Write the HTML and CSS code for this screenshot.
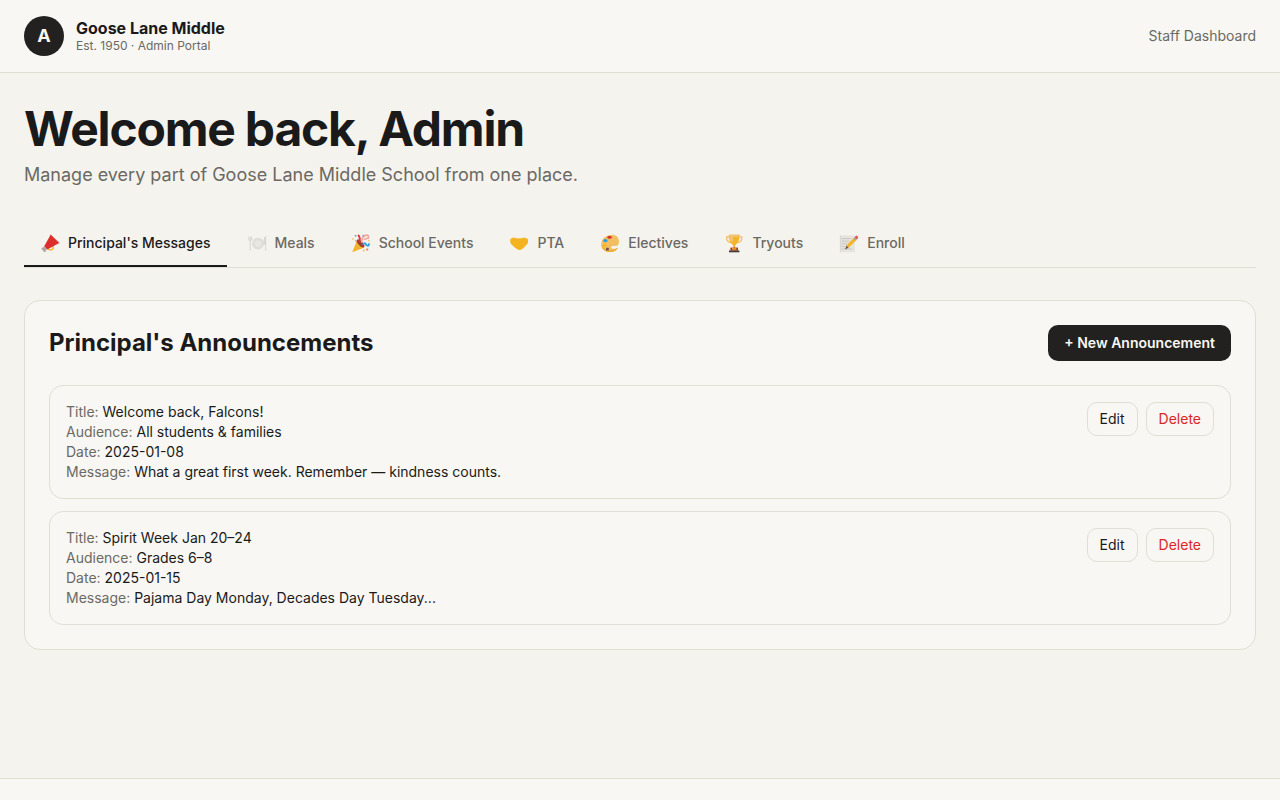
FILE: index.html
```html
<!DOCTYPE html>
<html lang="en">
<head>
  <meta charset="UTF-8">
  <meta name="viewport" content="width=device-width, initial-scale=1.0">
  <title>Goose Lane Middle - Admin Portal</title>
  <link rel="stylesheet" href="styles.css">
</head>
<body>
  <!-- Top bar -->
  <header class="site-header">
    <div class="brand">
      <div class="logo">A</div>
      <div>
        <div class="brand-name">Goose Lane Middle</div>
        <div class="brand-sub">Est. 1950 · Admin Portal</div>
      </div>
    </div>
    <div class="header-note">Staff Dashboard</div>
  </header>

  <main>
    <h1>Welcome back, Admin</h1>
    <p class="lead">Manage every part of Goose Lane Middle School from one place.</p>

    <!-- Section tabs -->
    <nav class="tabs">
      <button type="button" class="tab active">
        <!-- megaphone -->
        <svg class="icon" viewBox="0 0 20 20" aria-hidden="true">
          <circle cx="10.6" cy="14.2" r="2.7" fill="none" stroke="#f5b82e" stroke-width="1.4"/>
          <path d="M10.6 1.8 L19.3 10 L7.2 16.4 L4.2 13.2 Z" fill="#dc2f2c"/>
          <path d="M10.6 1.8 L19.3 10" stroke="#e2605a" stroke-width="1"/>
          <path d="M4 13.6 L7 16.5 L5.6 17.6 L5.8 18.8 L4.5 19.2 L1.2 15.8 Z" fill="#aaa7a3"/>
        </svg>
        Principal's Messages
      </button>
      <button type="button" class="tab">
        <!-- plate with fork and knife -->
        <svg class="icon" viewBox="0 0 20 20" aria-hidden="true">
          <circle cx="11" cy="10.6" r="6" fill="#e1dfd9"/>
          <circle cx="11" cy="10.6" r="4" fill="#e9e7e2" stroke="#d6d4ce" stroke-width=".5"/>
          <path d="M1.8 3.5 V7 Q3.2 9 4.6 7 V3.5 M3.2 3.5 V17.5" fill="none" stroke="#d8d6cf" stroke-width="1"/>
          <path d="M18.6 17.5 V3.5 Q16.8 5 17 11 H18.6" fill="#e1dfd9" stroke="#cfcdc6" stroke-width=".7"/>
        </svg>
        Meals
      </button>
      <button type="button" class="tab">
        <!-- party popper -->
        <svg class="icon" viewBox="0 0 20 20" aria-hidden="true">
          <path d="M6.2 6.8 L13.5 14.6 L1.2 19.2 Z" fill="#f3b32a"/>
          <ellipse cx="9.6" cy="10.4" rx="2.2" ry="5" transform="rotate(-43 9.6 10.4)" fill="#a53a32"/>
          <path d="M7 2 Q9.8 4.6 8.4 8.8" fill="none" stroke="#df3835" stroke-width="1.8"/>
          <path d="M10.8 9.6 Q10.6 4 14 2.4 Q18.8 1.6 17.2 5.4 Q14 5.2 13.2 7" fill="none" stroke="#efaaa5" stroke-width="1.8"/>
          <path d="M11.5 11.6 Q14.4 8.8 15.2 12 Q17.8 13.8 18.2 10.4" fill="none" stroke="#36a4df" stroke-width="2"/>
          <path d="M1.3 5.2h1.4v1.4H1.3z M12 16.8h1.5v1.5H12z" fill="#f3b32a"/>
          <path d="M3.8 2h1.5v1.5H3.8z M11.6 2h1.3v1.3h-1.3z" fill="#36a4df"/>
          <path d="M15.2 15.6h2v2h-2z M4 7.2h1.3v1.3H4z" fill="#e9817b"/>
          <path d="M17 7.2h1.8v1.3H17z" fill="#f1c15f"/>
        </svg>
        School Events
      </button>
      <button type="button" class="tab">
        <!-- handshake -->
        <svg class="icon" viewBox="0 0 20 20" aria-hidden="true">
          <path d="M1.4 6 Q3.8 4 6.8 5 Q10 5.5 13.2 5 Q16.2 4 18.8 6 Q20 10.2 16.8 12.6 Q13.2 17.2 10.2 17 Q7.4 16.6 3.6 12.6 Q.4 10.4 1.4 6 Z" fill="#f4b421"/>
          <path d="M3.4 4.7 Q5 4.2 6.8 5 L9.8 5.5 L13 5 Q15 4.2 16.6 4.7" fill="none" stroke="#f1d99b" stroke-width=".8" stroke-dasharray="1 1"/>
        </svg>
        PTA
      </button>
      <button type="button" class="tab">
        <!-- palette -->
        <svg class="icon" viewBox="0 0 20 20" aria-hidden="true">
          <path d="M12 1.8 Q18.6 2.2 19 8.4 Q18.8 13.6 14.6 12.8 Q11.4 13 12.6 15 Q14.2 16.8 17.6 14.6 Q17 18.4 11 19 Q2 19.2 1.2 11.8 Q1.2 3 12 1.8 Z" fill="#f3be62"/>
          <path d="M1.2 11.4 Q2 19.2 11 19 Q16.6 18.6 17.6 14.8 Q14.4 17.6 10 17.2 Q4.6 16.8 1.2 11.4 Z" fill="#efae35"/>
          <ellipse cx="9.6" cy="4.2" rx="2.2" ry="1.5" fill="#d7352c"/>
          <ellipse cx="5.4" cy="7.6" rx="2.2" ry="1.7" fill="#2ba0dd"/>
          <circle cx="4.4" cy="12.4" r="1.7" fill="#f7b718"/>
          <rect x="6" y="14.8" width="2.8" height="2.8" rx=".7" fill="#66594b"/>
          <ellipse cx="13.2" cy="14.4" rx="2" ry="1.4" fill="#f5f3ee"/>
        </svg>
        Electives
      </button>
      <button type="button" class="tab">
        <!-- trophy -->
        <svg class="icon" viewBox="0 0 20 20" aria-hidden="true">
          <path d="M5 3.8 H2.6 Q2 8.6 7 9.6 M15.4 3.8 H17.8 Q18.4 8.6 13.4 9.6" fill="none" stroke="#f0be62" stroke-width="1.3"/>
          <path d="M4.8 1.8 H15.6 Q15.8 8.6 11.8 11.8 L11.2 12.6 V15 H9.2 V12.6 L8.6 11.8 Q4.6 8.6 4.8 1.8 Z" fill="#f4b428"/>
          <path d="M4.8 1.8 H15.6 L15.5 3.6 Q12 4.2 9.4 3.8 L8.6 9.8 Q4.8 6.8 4.8 1.8 Z" fill="#f0c473"/>
          <path d="M6.4 14.6 H14 V17.4 H6.4 Z" fill="#a93228"/>
          <path d="M8 15.2 H12.4 V16.6 H8 Z" fill="#f3b32a"/>
          <path d="M5 17.4 H15.4 V19.3 H5 Z" fill="#493b32"/>
        </svg>
        Tryouts
      </button>
      <button type="button" class="tab">
        <!-- memo and pencil -->
        <svg class="icon" viewBox="0 0 20 20" aria-hidden="true">
          <path d="M1.2 2.4 H16 V19.3 H1.2 Z" fill="#e6e4df"/>
          <path d="M1.4 2.4 V19.2" stroke="#c9c7c0" stroke-width=".6"/>
          <path d="M2.6 5.6 H12 M2.6 8.2 H10 M2.6 10.8 H8 M2.6 13.4 H6 M2.6 16 H13" stroke="#bfbdb7" stroke-width=".8"/>
          <path d="M7.4 12.6 L15 4.8 L17.4 7 L9.6 14.8 Z" fill="#f4b428"/>
          <path d="M7.4 12.6 L9.6 14.8 L6 16.4 Z" fill="#705742"/>
          <path d="M14.4 5.4 L15.4 4.4 L17.8 6.6 L16.8 7.6 Z" fill="#9aa8ae"/>
          <path d="M15.4 4.4 L17.2 2.6 Q19.4 3 19.2 5 L17.8 6.6 Z" fill="#e35a59"/>
        </svg>
        Enroll
      </button>
    </nav>

    <!-- Announcements -->
    <section class="panel">
      <div class="panel-head">
        <h2>Principal's Announcements</h2>
        <button type="button" class="btn-primary">+ New Announcement</button>
      </div>

      <div class="items">
        <article class="item">
          <div class="fields">
            <div><span>Title:</span> Welcome back, Falcons!</div>
            <div><span>Audience:</span> All students &amp; families</div>
            <div><span>Date:</span> 2025-01-08</div>
            <div><span>Message:</span> What a great first week. Remember — kindness counts.</div>
          </div>
          <div class="actions">
            <button type="button" class="btn">Edit</button>
            <button type="button" class="btn danger">Delete</button>
          </div>
        </article>

        <article class="item">
          <div class="fields">
            <div><span>Title:</span> Spirit Week Jan 20–24</div>
            <div><span>Audience:</span> Grades 6–8</div>
            <div><span>Date:</span> 2025-01-15</div>
            <div><span>Message:</span> Pajama Day Monday, Decades Day Tuesday...</div>
          </div>
          <div class="actions">
            <button type="button" class="btn">Edit</button>
            <button type="button" class="btn danger">Delete</button>
          </div>
        </article>
      </div>
    </section>
  </main>

  <footer class="site-footer"></footer>
</body>
</html>
```
FILE: styles.css
```css
* {
  box-sizing: border-box;
}
body {
  margin: 0;
  min-height: 100vh;
  display: flex;
  flex-direction: column;
  background: #f5f3ee;
  color: #1a1a1a;
  font-family: Inter, sans-serif;
  font-size: 14px;
  line-height: 20px;
}
h1, h2, p {
  margin: 0;
}
button {
  font: inherit;
  color: inherit;
  cursor: pointer;
}

/* Header */
.site-header {
  display: flex;
  align-items: center;
  justify-content: space-between;
  padding: 16px 24px;
  background: #f8f7f3;
  border-bottom: 1px solid #e0dfd3;
}
.brand {
  display: flex;
  align-items: center;
  gap: 12px;
}
.logo {
  display: flex;
  align-items: center;
  justify-content: center;
  width: 40px;
  height: 40px;
  border-radius: 50%;
  background: #22211f;
  color: #f8f7f3;
  font-size: 18px;
  font-weight: 700;
}
.brand-name {
  font-size: 16px;
  font-weight: 700;
}
.brand-sub {
  font-size: 12px;
  line-height: 16px;
  color: #6b6963;
}
.header-note {
  color: #6b6963;
}

/* Page */
main {
  flex: 1;
  padding: 32px 24px 128px;
}
h1 {
  font-size: 48px;
  line-height: 48px;
  font-weight: 700;
  letter-spacing: -0.025em;
}
.lead {
  margin-top: 8px;
  font-size: 18px;
  line-height: 28px;
  color: #6b6963;
}

/* Tabs */
.tabs {
  display: flex;
  gap: 4px;
  margin: 32px 0;
  border-bottom: 1px solid #e0dfd3;
}
.tab {
  display: flex;
  align-items: center;
  gap: 8px;
  padding: 12px 16px;
  border: none;
  border-bottom: 2px solid transparent;
  background: none;
  font-weight: 500;
  color: #6b6963;
}
.tab.active {
  color: #1a1a1a;
  border-bottom-color: #1a1a1a;
}
.icon {
  width: 20px;
  height: 20px;
}

/* Announcements panel */
.panel {
  padding: 24px;
  background: #f8f7f3;
  border: 1px solid #e0dfd3;
  border-radius: 16px;
}
.panel-head {
  display: flex;
  align-items: center;
  justify-content: space-between;
  margin-bottom: 24px;
}
h2 {
  font-size: 24px;
  line-height: 32px;
  font-weight: 700;
}
.btn-primary {
  padding: 8px 16px;
  border: none;
  border-radius: 10px;
  background: #22211f;
  color: #f8f7f3;
  font-weight: 600;
}
.items {
  display: grid;
  gap: 12px;
}
.item {
  display: flex;
  align-items: flex-start;
  justify-content: space-between;
  gap: 16px;
  padding: 16px;
  border: 1px solid #e0dfd3;
  border-radius: 14px;
}
.fields span {
  color: #6b6963;
}
.actions {
  display: flex;
  gap: 8px;
}
.btn {
  padding: 6px 12px;
  border: 1px solid #e0dfd3;
  border-radius: 10px;
  background: none;
}
.danger {
  color: #dc2626;
}

/* Footer */
.site-footer {
  min-height: 22px;
  background: #f8f7f3;
  border-top: 1px solid #e0dfd3;
}
```
